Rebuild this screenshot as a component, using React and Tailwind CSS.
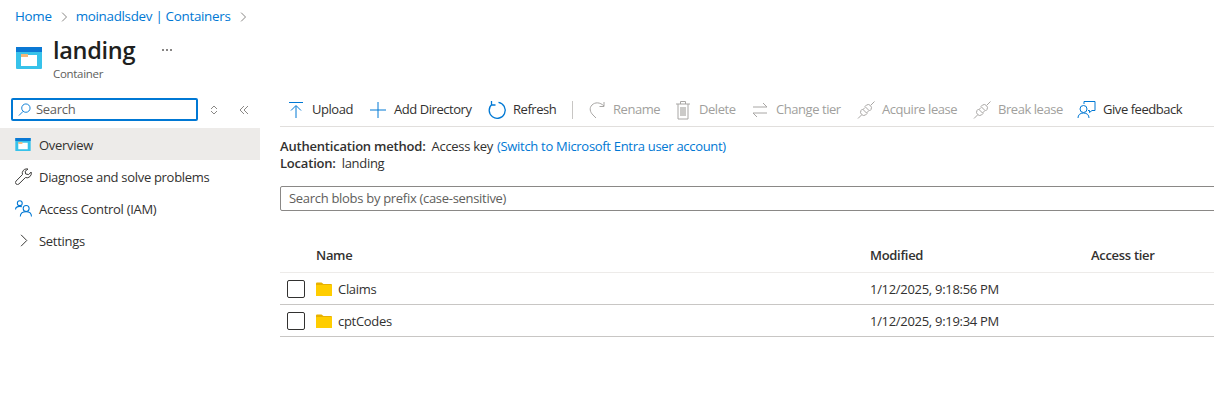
const ContainerIcon = ({ className }) => (
  <svg className={className} viewBox="0 0 26 22" fill="none">
    <rect x="0" y="0" width="26" height="22" rx="1" fill="#37c2ea" />
    <rect x="0" y="0" width="26" height="5" fill="#0a78d4" />
    <rect x="5" y="8" width="16" height="11" fill="#fff" />
    <rect x="5" y="7" width="7" height="3" fill="#f5b87a" />
  </svg>
);

const Folder = () => (
  <svg width="16" height="14" viewBox="0 0 16 14" className="mr-[6px]">
    <path d="M0 1.5A1 1 0 0 1 1 .5h4.5L7.5 2H15a1 1 0 0 1 1 1v10a1 1 0 0 1-1 1H1a1 1 0 0 1-1-1z" fill="#e8b100" />
    <rect x="0" y="3" width="16" height="11" rx="0.5" fill="#ffcd00" />
  </svg>
);

const Chevron = ({ size, color = "#605e5c" }) => (
  <svg width={size} height={size} viewBox="0 0 16 16" fill="none" stroke={color} strokeWidth="1.200" className="shrink-0">
    <path d="M5 1l7 7-7 7" />
  </svg>
);

// toolbar icons, 20px box, thin strokes
const Icon = ({ children, color }) => (
  <svg width="20" height="20" viewBox="0 0 20 20" fill="none" stroke={color} strokeWidth="1" className="shrink-0">
    {children}
  </svg>
);

const blue = "#0078d4";
const grey = "#a8a6a4";

const plug = (
  <>
    <path d="M2 18.500l3.500-3.500" />
    <path d="M6.500 9l4.500 4.500-1.500 1.500a3.300 3.300 0 0 1-4.500-4.500z" />
    <path d="M9 6.500l1.500-1.500a3.300 3.300 0 0 1 4.500 4.500L13.500 11z" />
    <path d="M15 5l3.500-3.500M7 9.500l2-2M10.500 13l2-2" />
  </>
);

const tools = [
  { label: "Upload", w: "w-[82px]", icon: <Icon color={blue}><path d="M3 2.500h14M10 18V6M5 10.500l5-5 5 5" /></Icon> },
  { label: "Add Directory", w: "w-[119px]", icon: <Icon color={blue}><path d="M10 2v16M2 10h16" /></Icon> },
  { label: "Refresh", w: "w-[85px]", icon: <Icon color={blue}><path strokeWidth="1.300" d="M11.500 2.400a8 8 0 1 1-6.500 1.800M4.500 1v4h4" /></Icon> },
];

const disabledTools = [
  { label: "Rename", w: "w-[86px]", icon: <Icon color={grey}><path d="M17 2v4.500h-4.500M17 6C13 2 8 2 5 5c-3 3-2 7 1 10l3 3" /></Icon> },
  { label: "Delete", w: "w-[77px]", icon: <Icon color={grey}><path d="M3 4h14M5 4v15h10V4M7.500 4V1.500h5V4" /><rect x="7" y="7" width="6" height="9" fill={grey} stroke="none" opacity="0.6" /></Icon> },
  { label: "Change tier", w: "w-[106px]", icon: <Icon color={grey}><path d="M3 7h14M13 3l4 4M17 13H3M7 17l-4-4" /></Icon> },
  { label: "Acquire lease", w: "w-[116px]", icon: <Icon color={grey}>{plug}</Icon> },
  { label: "Break lease", w: "w-[105px]", icon: <Icon color={grey}>{plug}</Icon> },
];

const ToolItem = ({ item, disabled }) => (
  <div className={`flex items-center shrink-0 gap-[6px] ${item.w} ${disabled ? "text-[#a19f9d]" : "text-[#323130]"}`}>
    {item.icon}
    <span className="whitespace-nowrap tracking-[-0.45px]">{item.label}</span>
  </div>
);

const NavItem = ({ icon, label, active }) => (
  <div className={`h-8 flex items-center pl-[15px] gap-2 ${active ? "bg-[#edebe9]" : ""}`}>
    <span className="w-4 flex justify-center shrink-0">{icon}</span>
    <span className="text-[#323130] pt-[4px]">{label}</span>
  </div>
);

const FileRow = ({ name, date }) => (
  <div className="h-8 flex items-center border-b border-[#c8c6c4] w-[934px]">
    <span className="w-[18px] h-[18px] border border-[#323130] rounded-[2px] ml-[7px] mr-[11px] shrink-0" />
    <span className="w-[554px] flex items-center shrink-0">
      <Folder />
      <span className="text-[#323130] pt-[2px]">{name}</span>
    </span>
    <span className="text-[#323130] pt-[2px]">{date}</span>
  </div>
);

export default function App() {
  return (
    <div className="w-[1214px] h-[410px] overflow-hidden bg-white text-[13px] font-['Open_Sans',sans-serif] tracking-[-0.3px]">
      <div className="h-8 flex items-center pl-[15px] text-[#0078d4] gap-[7px] pt-[1px] text-[13.4px]">
        <span>Home</span>
        <Chevron size={10} />
        <span>moinadlsdev | Containers</span>
        <Chevron size={10} />
      </div>

      <div className="h-[58px] flex pl-4">
        <ContainerIcon className="w-[26px] h-[22px] mt-[15px] shrink-0" />
        <div className="ml-[11px] mt-[2px]">
          <div className="flex items-start">
            <span className="text-[23.500px] leading-[32px] font-semibold text-[#201f1e]">landing</span>
            <span className="ml-[27px] mt-[15px] flex gap-[2px]">
              <span className="w-[2px] h-[2px] rounded-full bg-[#605e5c]" />
              <span className="w-[2px] h-[2px] rounded-full bg-[#605e5c]" />
              <span className="w-[2px] h-[2px] rounded-full bg-[#605e5c]" />
            </span>
          </div>
          <div className="text-[11.500px] leading-[16px] text-[#605e5c]">Container</div>
        </div>
      </div>

      <div className="flex">
        <div className="w-[260px] shrink-0">
          <div className="h-[38px] flex items-start pl-[11px] pt-2">
            <div className="w-[187px] h-[23px] border-2 border-[#0078d4] rounded-[2px] flex items-center pl-[5px] gap-[5px]">
              <svg width="13" height="13" viewBox="0 0 14 14" fill="none" stroke="#0078d4" strokeWidth="1">
                <circle cx="8.500" cy="5.500" r="4.500" />
                <path d="M5.500 9L1 13.500" />
              </svg>
              <span className="text-[#605e5c]">Search</span>
            </div>
            <svg width="10" height="10" viewBox="0 0 10 10" fill="none" stroke="#8a8886" className="ml-[11px] mt-[7px]">
              <path d="M2 4l3-3 3 3M2 6l3 3 3-3" />
            </svg>
            <svg width="10" height="10" viewBox="0 0 10 10" fill="none" stroke="#8a8886" className="ml-5 mt-[7px]">
              <path d="M5 1L1 5l4 4M9 1L5 5l4 4" />
            </svg>
          </div>
          <NavItem active label="Overview" icon={<ContainerIcon className="w-4 h-[13px]" />} />
          <NavItem
            label="Diagnose and solve problems"
            icon={
              <svg width="17" height="17" viewBox="0 0 16 16" fill="none" stroke="#323130" strokeWidth="0.900" className="shrink-0">
                <path d="M11 .8a4.200 4.200 0 0 0-4 5.400L1 12.300a1.900 1.900 0 0 0 2.700 2.700L9.800 9a4.200 4.200 0 0 0 5.400-5.200L12.800 6.200 10 5.600 9.600 3 12.200 1A4.200 4.200 0 0 0 11 .8z" />
              </svg>
            }
          />
          <NavItem
            label="Access Control (IAM)"
            icon={
              <svg width="17" height="17" viewBox="0 0 16 16" fill="none" stroke="#0078d4" strokeWidth="1" className="shrink-0">
                <circle cx="4.500" cy="3" r="2.300" />
                <circle cx="10.500" cy="8" r="2.800" />
                <path d="M.5 9c0-2 1.500-3 4-3 1 0 1.500.2 2 .5M5 15.500c0-2.500 2-4.500 5.500-4.500s5 2 5 4.500" />
              </svg>
            }
          />
          <NavItem label="Settings" icon={<Chevron size={13} color="#323130" />} />
        </div>

        <div className="flex-1 min-w-0 pl-5">
          <div className="h-[37px] flex items-center pl-[6px] pt-[3px] border-b border-[#e1dfdd]">
            {tools.map((t) => (
              <ToolItem key={t.label} item={t} />
            ))}
            <span className="w-px h-[18px] bg-[#c8c6c4] mr-[14px] shrink-0" />
            {disabledTools.map((t) => (
              <ToolItem key={t.label} item={t} disabled />
            ))}
            <ToolItem
              item={{
                label: "Give feedback",
                w: "w-[110px]",
                icon: (
                  <Icon color={blue}>
                    <path d="M7 4V1.500h11v9h-3l-2.500 2v-2H11" />
                    <circle cx="6.500" cy="9" r="3.500" />
                    <path d="M1 18c0-3 2-5 5.500-5S12 15 12 18" />
                  </Icon>
                ),
              }}
            />
          </div>

          <div className="mt-[11px] leading-[17px] text-[#323130]">
            <div>
              <span className="font-semibold tracking-[-0.2px]">Authentication method:</span>
              <span className="ml-[6px]">Access key</span>
              <span className="ml-1 text-[#0078d4]">(Switch to Microsoft Entra user account)</span>
            </div>
            <div>
              <span className="font-semibold tracking-[-0.2px]">Location:</span>
              <span className="ml-[6px]">landing</span>
            </div>
          </div>

          <div className="mt-[14px] h-[25px] w-[960px] border border-[#8a8886] rounded-[2px] flex items-center pl-2 text-[#605e5c]">
            Search blobs by prefix (case-sensitive)
          </div>

          <div className="mt-[26px] h-[36px] flex items-center border-b border-[#edebe9] w-[934px] font-semibold text-[#323130] pt-[2px]">
            <span className="ml-9 w-[554px]">Name</span>
            <span className="w-[221px]">Modified</span>
            <span>Access tier</span>
          </div>
          <FileRow name="Claims" date="1/12/2025, 9:18:56 PM" />
          <FileRow name="cptCodes" date="1/12/2025, 9:19:34 PM" />
        </div>
      </div>
    </div>
  );
}
